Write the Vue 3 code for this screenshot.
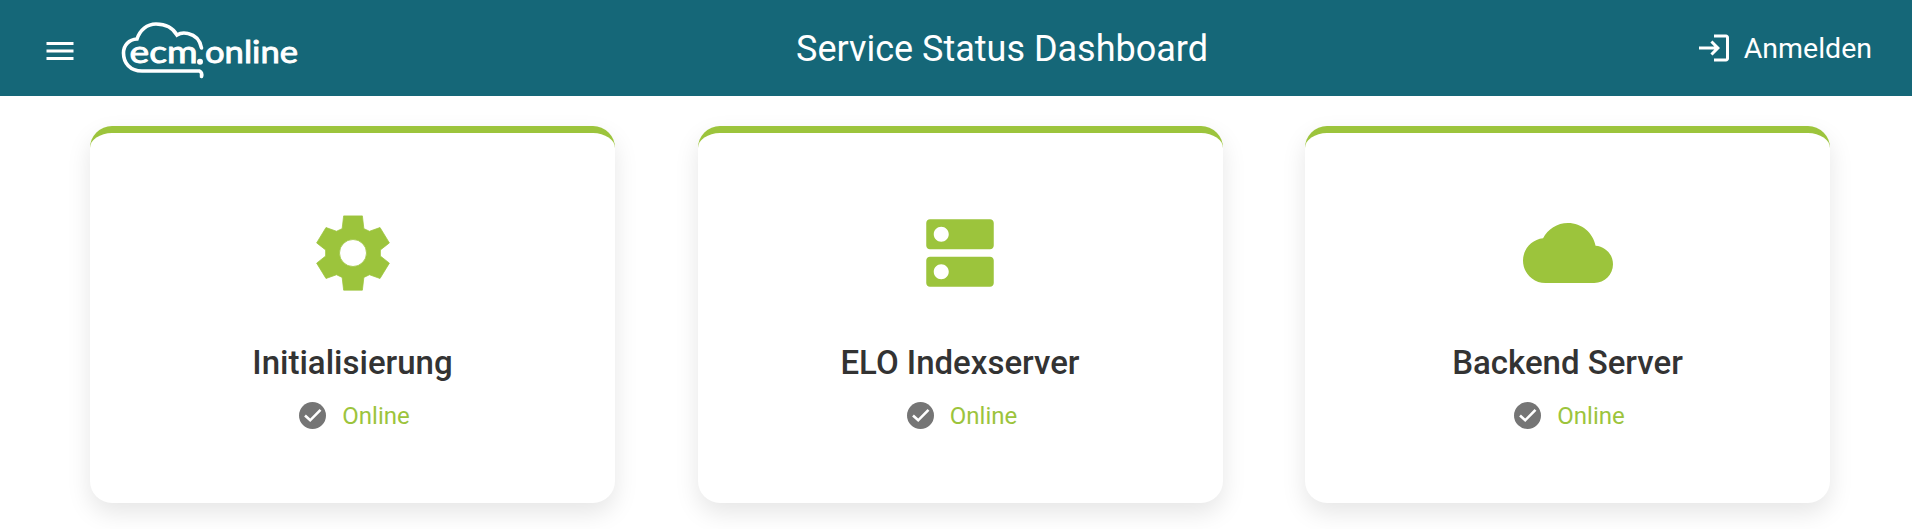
<script setup>
const services = [
  { name: "Initialisierung", icon: "gear" },
  { name: "ELO Indexserver", icon: "server" },
  { name: "Backend Server", icon: "cloud" }
]

const paths = {
  gear: "M9.5 2.1H14.5L14.9 5.5L16.4 6.2L19.2 5.2L21.7 9.3L19.3 11.2V12.8L21.7 14.7L19.2 18.8L16.4 17.8L14.9 18.5L14.5 21.9H9.5L9.1 18.5L7.6 17.8L4.8 18.8L2.3 14.7L4.7 12.8V11.2L2.3 9.3L4.8 5.2L7.6 6.2L9.1 5.5ZM12 8.4A3.6 3.6 0 1 0 12 15.6A3.6 3.6 0 1 0 12 8.4Z",
  server: "M20 13H4c-.55 0-1 .45-1 1v6c0 .55.45 1 1 1h16c.55 0 1-.45 1-1v-6c0-.55-.45-1-1-1zM7 19c-1.1 0-2-.9-2-2s.9-2 2-2 2 .9 2 2-.9 2-2 2zM20 3H4c-.55 0-1 .45-1 1v6c0 .55.45 1 1 1h16c.55 0 1-.45 1-1V4c0-.55-.45-1-1-1zM7 9c-1.1 0-2-.9-2-2s.9-2 2-2 2 .9 2 2-.9 2-2 2z",
  cloud: "M19.35 10.04C18.67 6.59 15.64 4 12 4 9.11 4 6.6 5.64 5.35 8.04 2.34 8.36 0 10.91 0 14c0 3.31 2.69 6 6 6h13c2.76 0 5-2.24 5-5 0-2.64-2.05-4.78-4.65-4.96z"
}
</script>

<template>
  <div class="page">
    <header class="topbar">
      <div class="left">
        <svg class="menu" viewBox="0 0 24 24"><path d="M3 18h18v-2H3v2zm0-5h18v-2H3v2zm0-5h18V6H3v2z" /></svg>
        <svg class="logo" viewBox="0 0 182 60">
          <path class="logo-cloud" d="M81.5 56.5C82 54.5 81.5 52 79.5 51L22 51C10 51 3.5 43 3.5 33C3.5 25 9 19.5 17 19C20 10 27 4 36 4C45 4 53 8 57 15C60 13 64 12.5 68 13.5C75 15 80 20 81.5 28" />
          <circle class="logo-dot" cx="80" cy="41.7" r="3" />
          <text class="logo-text" x="9.5" y="43" textLength="68" lengthAdjust="spacingAndGlyphs">ecm</text>
          <text class="logo-text" x="85" y="43" textLength="93" lengthAdjust="spacingAndGlyphs">online</text>
        </svg>
      </div>
      <div class="title">Service Status Dashboard</div>
      <div class="login">
        <svg class="login-icon" viewBox="0 0 24 24"><path d="M11 7L9.6 8.4l2.6 2.6H2v2h10.2l-2.6 2.6L11 17l5-5-5-5zm9 12h-8v2h8c1.1 0 2-.9 2-2V5c0-1.1-.9-2-2-2h-8v2h8v14z" /></svg>
        <span>Anmelden</span>
      </div>
    </header>

    <main class="cards">
      <section v-for="service in services" :key="service.name" class="card">
        <svg class="card-icon" :class="service.icon" viewBox="0 0 24 24"><path :d="paths[service.icon]" fill-rule="evenodd" /></svg>
        <h2>{{ service.name }}</h2>
        <div class="status">
          <svg class="check" viewBox="0 0 27 27">
            <circle cx="13.5" cy="13.5" r="13.5" />
            <path d="M6 13.5l5.2 4.8L21.5 7.8" />
          </svg>
          <span>Online</span>
        </div>
      </section>
    </main>
  </div>
</template>

<style>
html,
body {
  margin: 0;
  background: #fff;
}
</style>

<style scoped>
.page {
  font-family: Roboto, "Liberation Sans", sans-serif;
  height: 529px;
  overflow: hidden;
}

.topbar {
  height: 96px;
  background: #156778;
  color: #fff;
  display: grid;
  grid-template-columns: 754px auto 1fr;
  align-items: center;
  padding: 0 40px 0 42px;
}

.left {
  display: flex;
  align-items: center;
  gap: 42px;
}

.menu {
  width: 36px;
  height: 36px;
  fill: #fff;
  margin-top: 6px;
}

.logo {
  width: 182px;
  height: 60px;
  margin-top: 4px;
}

.logo-cloud {
  fill: none;
  stroke: #fff;
  stroke-width: 3.6;
  stroke-linecap: round;
}

.logo-dot {
  fill: #fff;
}

.logo-text {
  font-family: Lato, sans-serif;
  font-size: 31px;
  fill: #fff;
  stroke: #fff;
  stroke-width: 0.9;
}

.title {
  font-size: 36px;
  line-height: 40px;
  margin-top: 2px;
}

.login {
  justify-self: end;
  display: flex;
  align-items: center;
  gap: 12px;
  font-size: 28.5px;
}

.login-icon {
  width: 36px;
  height: 36px;
  fill: #fff;
}

.cards {
  display: grid;
  grid-template-columns: repeat(3, 525px);
  justify-content: space-between;
  padding: 30px 82px 0 90px;
}

.card {
  height: 377px;
  box-sizing: border-box;
  background: #fff;
  border-top: 7px solid #9cc43c;
  border-radius: 22px;
  box-shadow: 0 10px 24px rgba(0, 0, 0, 0.1);
  display: flex;
  flex-direction: column;
  align-items: center;
  padding-top: 75px;
}

.card-icon {
  width: 90px;
  height: 90px;
  fill: #9cc43c;
}

.card-icon.gear {
  stroke: #9cc43c;
  stroke-width: 0.2;
  stroke-linejoin: round;
}

.card h2 {
  margin: 45px 0 0;
  font-size: 33px;
  line-height: 40px;
  font-weight: 500;
  color: #333;
}

.status {
  display: flex;
  align-items: center;
  gap: 16px;
  margin-top: 17px;
  padding-left: 4px;
  font-size: 24px;
  color: #9cc43c;
}

.status span {
  padding-top: 2px;
}

.check {
  width: 27px;
  height: 27px;
}

.check circle {
  fill: #757575;
}

.check path {
  fill: none;
  stroke: #fff;
  stroke-width: 2.6;
}
</style>
